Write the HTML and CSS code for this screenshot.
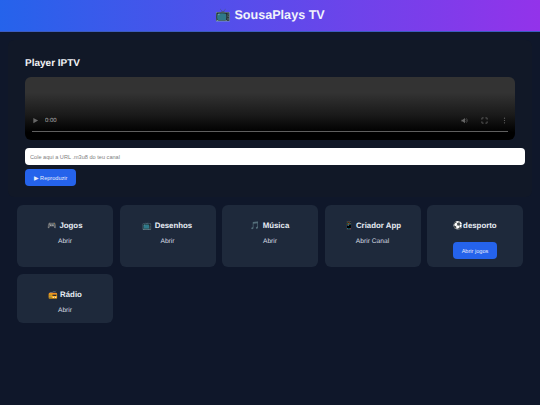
FILE: index.html
```html
<!DOCTYPE html>
<html lang="pt">
<head>
<meta charset="utf-8">
<title>SousaPlays TV</title>
<link rel="stylesheet" href="styles.css">
</head>
<body>
<header class="top"><h1>📺 SousaPlays TV</h1></header>
<main>
  <section class="player">
    <h2>Player IPTV</h2>
    <div class="video">
      <div class="controls">
        <svg class="ic" viewBox="0 0 8 8"><path d="M1.5 1 7 4 1.5 7z"/></svg>
        <span class="time">0:00</span>
        <span class="spacer"></span>
        <svg class="ic" viewBox="0 0 8 8"><path d="M0.5 3H2L4.5 1V7L2 5H0.5z"/><path d="M5.3 2.5a2 2 0 0 1 0 3M6.2 1.5a3.4 3.4 0 0 1 0 5" fill="none" stroke="#666" stroke-width=".6"/></svg>
        <svg class="ic" viewBox="0 0 8 8"><path d="M1 3V1H3M5 1H7V3M7 5V7H5M3 7H1V5" fill="none" stroke="#666" stroke-width=".9"/></svg>
        <svg class="ic" viewBox="0 0 8 8"><circle cx="4" cy="1.3" r=".7"/><circle cx="4" cy="4" r=".7"/><circle cx="4" cy="6.7" r=".7"/></svg>
      </div>
      <div class="track"></div>
    </div>
    <input class="url" type="text" placeholder="Cole aqui a URL .m3u8 do teu canal">
    <button class="btn play" type="button">▶ Reproduzir</button>
  </section>
  <section class="grid">
    <article class="card"><h3>🎮 Jogos</h3><p>Abrir</p></article>
    <article class="card"><h3>📺 Desenhos</h3><p>Abrir</p></article>
    <article class="card"><h3>🎵 Música</h3><p>Abrir</p></article>
    <article class="card"><h3>📱 Criador App</h3><p>Abrir Canal</p></article>
    <article class="card"><h3>⚽desporto</h3><button class="btn open" type="button">Abrir jogos</button></article>
    <article class="card"><h3>📻 Rádio</h3><p>Abrir</p></article>
  </section>
</main>
</body>
</html>
```
FILE: styles.css
```css
* { box-sizing: border-box; }
html, body { margin: 0; height: 100%; }
body {
  background: #0f172a;
  color: #fff;
  font-family: "Liberation Sans", sans-serif;
  text-rendering: geometricPrecision;
}
.top {
  height: 32px;
  display: flex;
  align-items: center;
  justify-content: center;
  background: linear-gradient(90deg, #2563eb, #9333ea);
  border-bottom: 1px solid #3b5bc0;
}
.top h1 { margin: 0; font-size: 12.6px; font-weight: 700; color: #f1f3fb; opacity: .999; }
main { padding: 8px 8px 0; }
.player {
  height: 157px;
  padding: 18px 17px 0;
  background: #111827;
  border-radius: 6px;
}
.player h2 { margin: 0 0 7px; font-size: 10px; line-height: 12px; font-weight: 700; color: #f1f3f6; opacity: .999; }
.video {
  width: 490px;
  height: 63px;
  border-radius: 6px;
  background: linear-gradient(180deg, #333 0, #333 25%, #1a1a1a 60%, #000 88%);
  padding: 0 7px;
  display: flex;
  flex-direction: column;
  justify-content: flex-end;
}
.controls { display: flex; align-items: center; height: 8px; gap: 13px; margin-bottom: 6px; }
.ic { width: 7px; height: 7px; fill: #666; }
.time { font-size: 6px; color: #aaa; margin-left: -7px; opacity: .999; }
.spacer { flex: 1; }
.track { height: 1.5px; background: #5f5f5f; margin-bottom: 8px; }
.url {
  display: block;
  width: 500px;
  height: 17px;
  margin: 8px 0 4px;
  padding: 0 5px;
  border: 0;
  border-radius: 4px;
  background: #fff;
  font-family: "Liberation Sans", sans-serif;
  font-size: 5.6px;
  opacity: .999;
}
.url::placeholder { color: #808080; }
.btn {
  display: block;
  border: 0;
  border-radius: 4px;
  background: #2563eb;
  color: #e6ecfb;
  font-family: "Liberation Sans", sans-serif;
  font-size: 5.6px;
  height: 17px;
  padding: 0;
  opacity: .999;
}
.play { width: 51px; }
.grid {
  margin: 8px 9px 0;
  display: grid;
  grid-template-columns: repeat(5, 96px);
  gap: 7px 6.5px;
}
.card {
  background: #1e293b;
  border-radius: 6px;
  padding: 16px 8px 8px;
  text-align: center;
}
.card h3 { margin: 0; font-size: 7.85px; line-height: 10px; font-weight: 700; color: #e8edf5; opacity: .999; }
.card p { margin: 7px 0 1px; font-size: 6.66px; line-height: 7px; color: #d5dae2; opacity: .999; }
.card .open { width: 44px; margin: 11px auto 0; }
```
